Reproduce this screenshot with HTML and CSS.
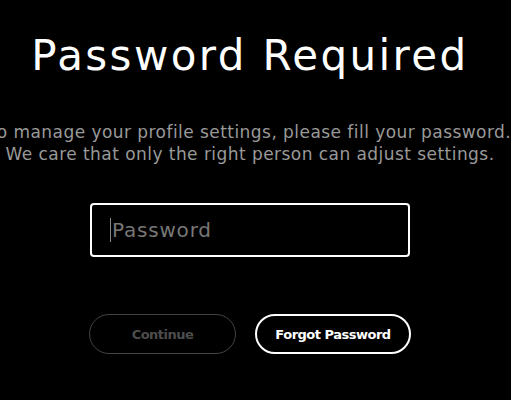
FILE: index.html
```html
<!DOCTYPE html>
<html lang="en">
<head>
    <meta charset="UTF-8">
    <meta name="viewport" content="width=device-width, initial-scale=1.0">
    <title>Password Required</title>
    <link rel="stylesheet" href="styles.css">
</head>
<body>

    <div class="page">
        <h1>Password Required</h1>
        <p class="intro">To manage your profile settings, please fill your password.<br>We care that only the right person can adjust settings.</p>

        <form class="pass-form">
            <div class="field">
                <span class="caret"></span>
                <input type="password" placeholder="Password">
            </div>
            <div class="actions">
                <button type="submit" class="btn btn-disabled" disabled>Continue</button>
                <button type="button" class="btn btn-outline">Forgot Password</button>
            </div>
        </form>
    </div>

</body>
</html>
```

FILE: styles.css
```css
body {
    margin: 0;
    background-color: #000;
    font-family: "DejaVu Sans", Verdana, sans-serif;
    color: #fff;
    overflow: hidden;
}
.page {
    width: 500px;
    display: flex;
    flex-direction: column;
    align-items: center;
}
h1 {
    font-size: 42px;
    font-weight: normal;
    letter-spacing: 2.4px;
    line-height: 50px;
    margin: 31px 0 0;
}
.intro {
    white-space: nowrap;
    text-align: center;
    color: #999;
    font-size: 17px;
    letter-spacing: 0.45px;
    line-height: 22px;
    margin: 40px 0 0;
}
.pass-form {
    display: flex;
    flex-direction: column;
    align-items: center;
    margin-top: 38px;
}
.field {
    position: relative;
}
.field input {
    box-sizing: border-box;
    width: 320px;
    height: 54px;
    padding: 0 0 0 20px;
    border: 2px solid #fff;
    border-radius: 4px;
    background: #000;
    color: #fff;
    font-family: inherit;
    font-size: 20px;
    letter-spacing: 0.8px;
    outline: none;
}
.field input::placeholder {
    color: #777;
}
.caret {
    position: absolute;
    left: 20px;
    top: 15px;
    width: 1px;
    height: 24px;
    background: #888;
}
.actions {
    display: flex;
    gap: 19px;
    margin-top: 57px;
}
.btn {
    height: 40px;
    border-radius: 20px;
    background: #000;
    font-family: inherit;
    font-size: 13px;
    font-weight: bold;
    letter-spacing: -0.5px;
    cursor: pointer;
}
.btn-disabled {
    width: 147px;
    border: 1.5px solid #444;
    color: #4d4d4d;
    cursor: default;
}
.btn-outline {
    width: 156px;
    border: 2px solid #fff;
    color: #fff;
}
```
